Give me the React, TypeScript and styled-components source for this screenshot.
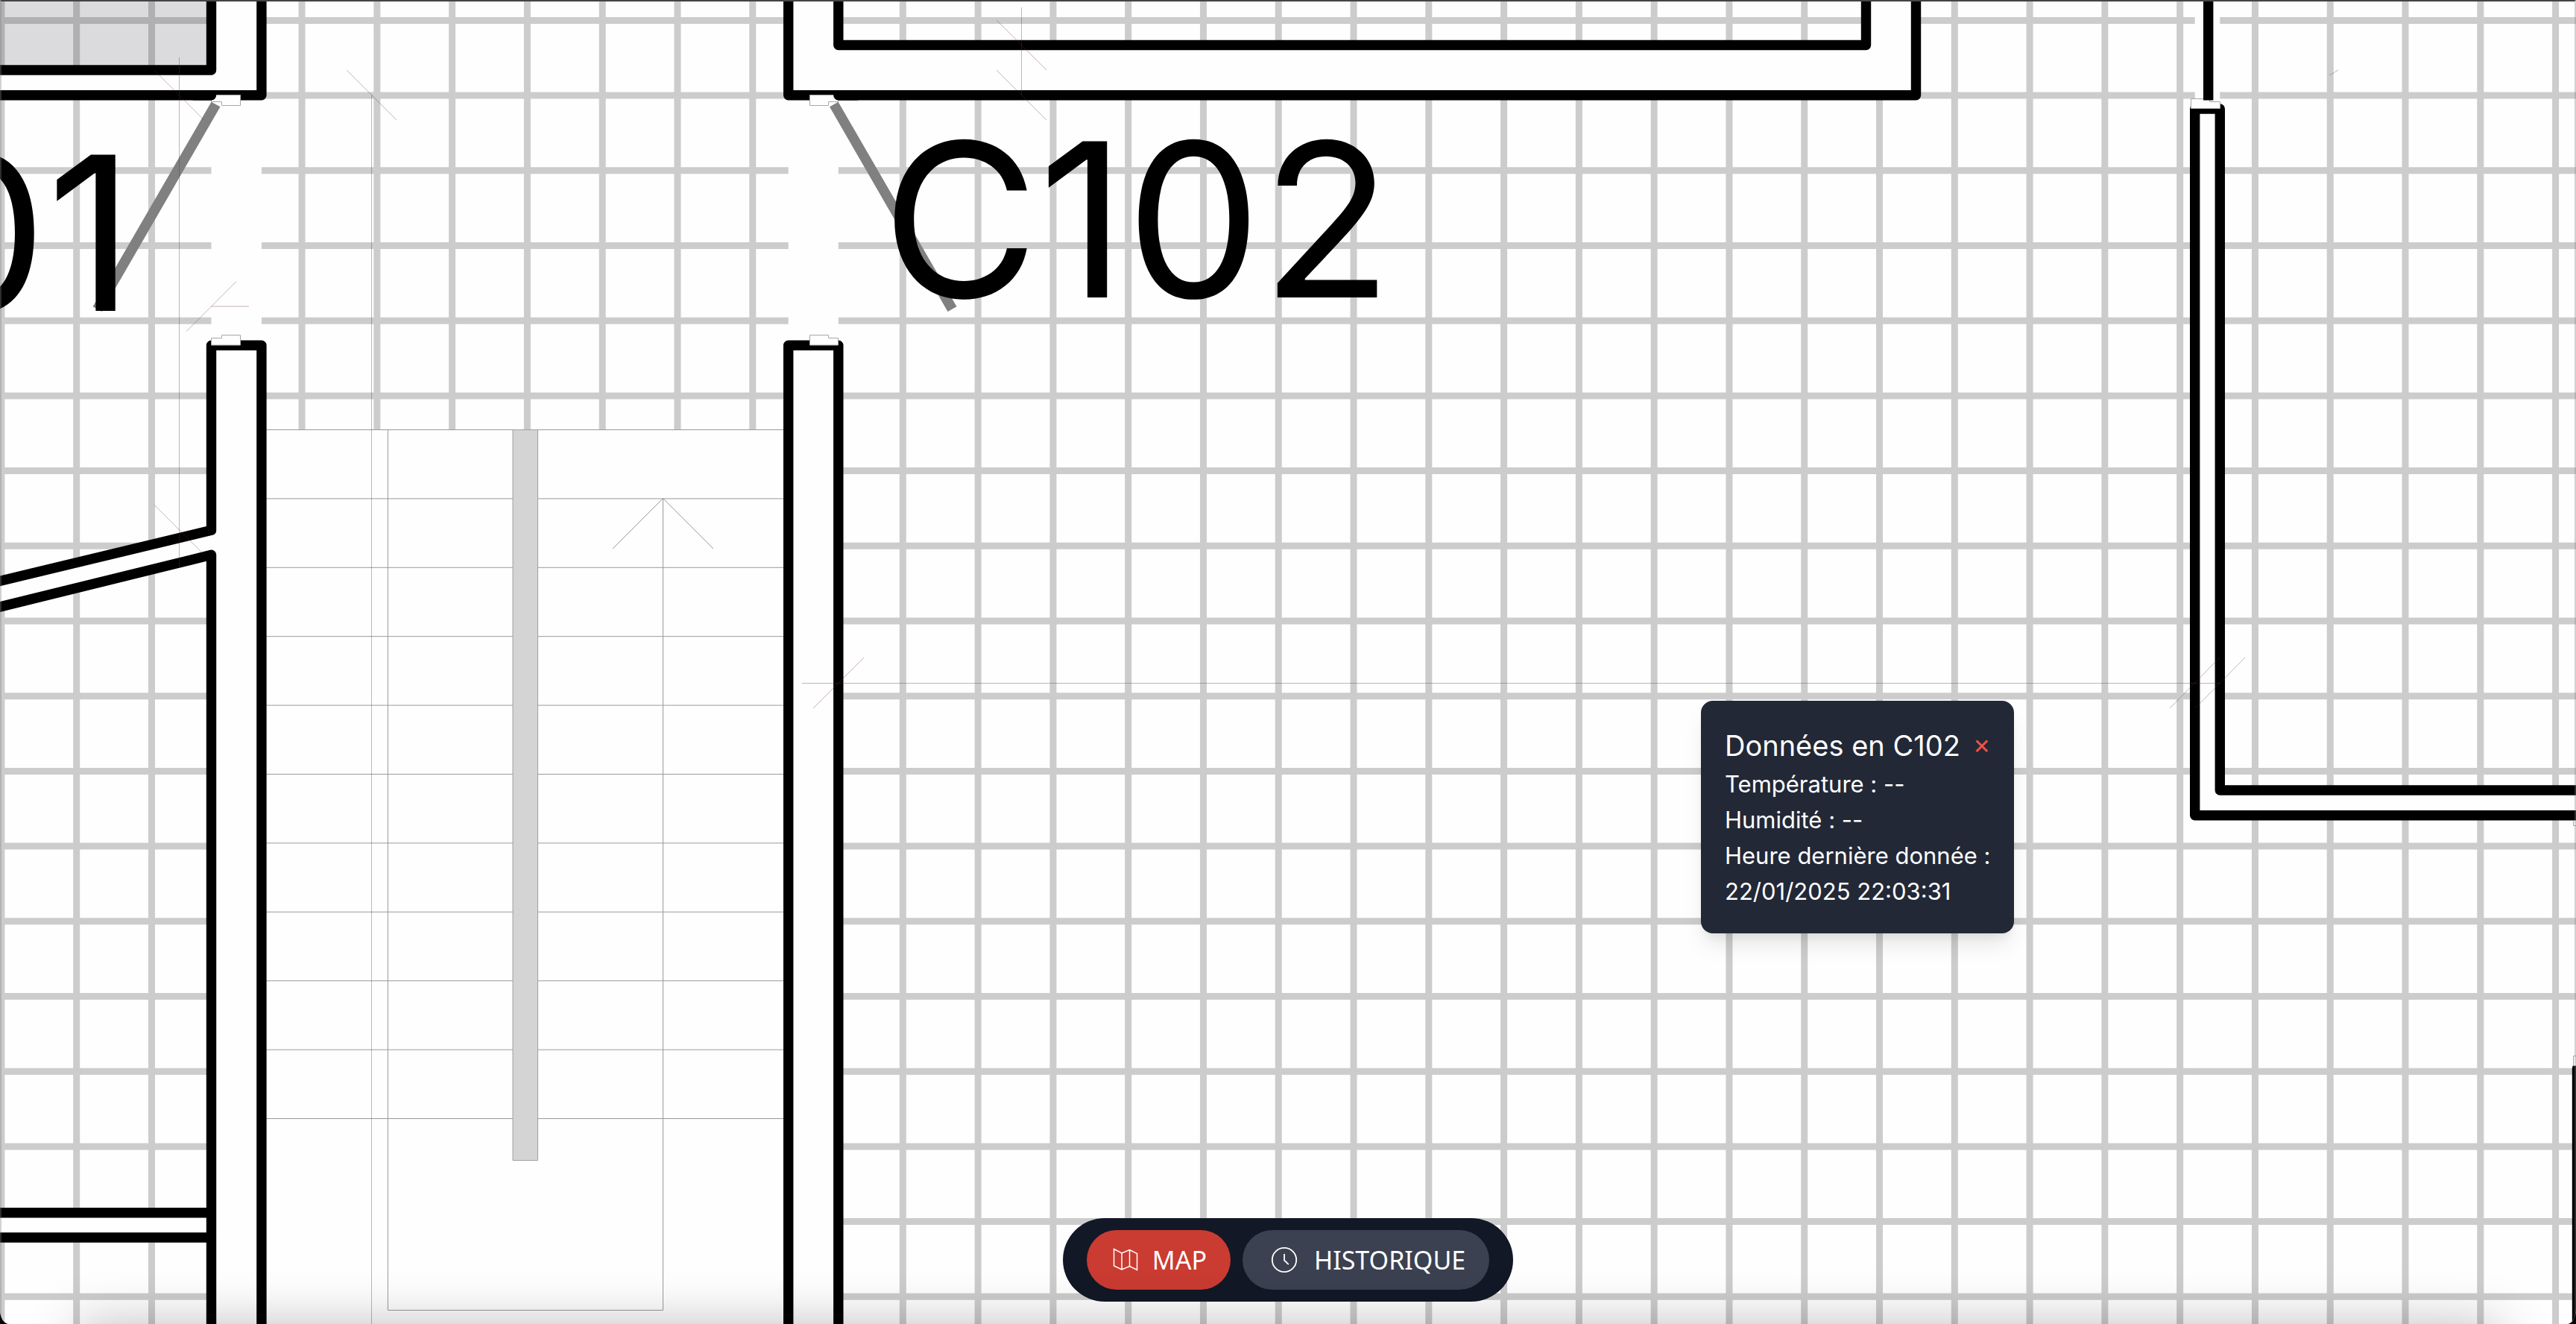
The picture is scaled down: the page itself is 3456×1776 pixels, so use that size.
import React from "react";
import styled, { createGlobalStyle } from "styled-components";

const GlobalStyle = createGlobalStyle`
  *, *::before, *::after { box-sizing: border-box; }
  body { margin: 0; background: #000; }
`;

const Screen = styled.main`
  position: relative;
  display: grid;
  grid-template: minmax(0, 1fr) / minmax(0, 1fr);
  height: 100vh;
  overflow: hidden;
  background: #fefefe;
  border-radius: 0 0 12px 12px / 0 0 20px 20px;
  font-family: Inter, "Liberation Sans", sans-serif;

  &::before {
    content: "";
    position: absolute;
    z-index: 3;
    top: 100%;
    left: 104px;
    right: 104px;
    height: 200px;
    box-shadow: 0 0 68px rgba(0, 0, 0, 0.25);
    pointer-events: none;
  }

  &::after {
    content: "";
    position: absolute;
    z-index: 3;
    inset: 0;
    border: solid rgba(128, 128, 128, 0.35);
    border-width: 0 2px;
    border-top: 2px solid #444;
    pointer-events: none;
  }
`;

const Plan = styled.svg`
  grid-area: 1 / 1;
  display: block;
  width: 100%;
  height: 100%;

  .grid { stroke: #ccc; stroke-width: 9; fill: none; }
  .white { fill: #fefefe; }
  .shade { fill: rgba(0, 0, 20, 0.137); }
  .wall { stroke: #000; stroke-width: 13.4; fill: none; stroke-linejoin: round; stroke-linecap: round; }
  .butt { stroke-linecap: butt; }
  .frame { fill: #fefefe; stroke: #a4a8a4; stroke-width: 1; }
  .leaf { fill: #808080; }
  .thin { stroke: #9a9a9a; stroke-width: 1; fill: none; }
  .rail { fill: #d4d4d4; stroke: #a0a0a0; stroke-width: 1; }
  .dim { stroke: rgba(100, 45, 55, 0.36); stroke-width: 1; fill: none; }
`;

const RoomName = styled.text`
  font-family: Inter, "Liberation Sans", sans-serif;
  font-size: 288px;
  fill: #000;
`;

const Popup = styled.aside`
  position: absolute;
  z-index: 1;
  left: 2282px;
  top: 940px;
  padding: 32px;
  border-radius: 16px;
  background: #222836;
  color: #fff;
  font-size: 31px;
  line-height: 48px;
  white-space: nowrap;
  box-shadow: 0 20px 30px -6px rgba(0, 0, 0, 0.1), 0 8px 12px -4px rgba(0, 0, 0, 0.06);
`;

const PopupHead = styled.header`
  display: flex;
  align-items: flex-start;
  justify-content: space-between;
`;

const PopupTitle = styled.h2`
  margin: 0;
  font-size: 38px;
  font-weight: 400;
  line-height: 56px;
`;

const Close = styled.button`
  padding: 0;
  border: 0;
  background: none;
  color: #ef5148;
  font: inherit;
  font-size: 36px;
  line-height: 52px;
  cursor: pointer;
`;

const Line = styled.p`
  margin: 0;
`;

const Nav = styled.nav`
  grid-area: 1 / 1;
  z-index: 2;
  align-self: end;
  justify-self: center;
  display: flex;
  gap: 16px;
  margin-bottom: 30px;
  padding: 16px 32px;
  border-radius: 56px;
  background: #121826;
`;

const Tab = styled.button<{ $active?: boolean }>`
  display: flex;
  align-items: center;
  gap: 16px;
  height: 80px;
  padding: 0 32px;
  border: 0;
  border-radius: 40px;
  background: ${(p) => (p.$active ? "#ca3b32" : "#3b4150")};
  color: #fff;
  font-family: "Noto Sans", "DejaVu Sans", sans-serif;
  font-size: 34px;
  font-weight: 400;
  line-height: 48px;
  cursor: pointer;
`;

const TabIcon = styled.svg<{ $size: number }>`
  width: ${(p) => p.$size}px;
  height: ${(p) => p.$size}px;
  fill: none;
  stroke: currentColor;
`;

const columns = Array.from({ length: 35 }, (_, i) => 1.9 + i * 100.785);
const rows = Array.from({ length: 18 }, (_, i) => 27.4 + i * 100.7);
const steps = Array.from({ length: 11 }, (_, i) => 576.5 + i * 92.4);

const dimensions =
  "M240.5 77V761M498.5 128V1776M206.7 94L273.7 161M465.2 94L532 161" +
  "M317 377.5L250 444.5M206.7 677L273.7 744M1337 27L1404 94M1337 94L1404 161" +
  "M1370.5 10V128M1076 916.5H2978M1159 882L1091 950M2978 882L2911 950M3012 882L2945 950M283.5 411H334M3125 101L3137 94";

function FloorPlan() {
  return (
    <Plan viewBox="0 0 3456 1776" preserveAspectRatio="xMidYMid slice" role="img" aria-label="Plan">
      <path className="grid" d={columns.map((x) => `M${x} 0V1776`).join("") + rows.map((y) => `M0 ${y}H3456`).join("")} />
      <path className="shade" d="M0 0H277V88H0Z" />

      <path
        className="white"
        d="M0 94H283.5V0H350.9V1776H283.5V744.3L0 814V779.3L283.5 711.3V127.7H0ZM0 1626.7H283.5V1660H0Z
           M1057.7 0H1124.8V60.5H2503.5V0H2570.5V127.7H1124.8V1776H1057.7Z
           M2944.7 0H2978.3V1060H3456V1093.7H2944.7Z M350.9 576H1057.7V1776H350.9Z"
      />

      <path className="thin" d={steps.map((y) => `M357 ${y}H1051`).join("")} />
      <path className="thin" d="M520.4 576V1757.5H889.5V668.5M822 736L889.5 668.5L957 736" />
      <path className="rail" d="M688 576.5H721.5V1556.5H688Z" />

      <path
        className="wall"
        d="M-20 94H283.5V-20M350.9 -20V127.7H-20M-20 784.1L283.5 711.3V463.3H350.9V1800M-20 818.9L283.5 744.3V1800
           M-20 1626.7H283.5M-20 1660H283.5
           M1057.7 -20V127.7H2570.5V-20M1124.8 -20V60.5H2503.5V-20M1057.7 1800V463.3H1124.8V1800
           M3480 1093.7H2944.7V146H2978.3V1060H3480M3457.5 1800V1433"
      />
      <path className="frame" d="M2939.5 132.5H2964.5V136.5H2978.5V145.5H2939.5Z" />
      <path className="wall butt" d="M2962.7 0V134.5" />
      <path className="frame" d="M3452.5 1416.5H3470V1429.5H3452.5ZM3452.5 1100.5V1107.5H3470" />

      <path className="frame" d="M290 127.5H322.5V141.5H297.5V136.5H283.5V127.5Z" />
      <path className="frame" d="M297.5 449.5H322.5V463H283.5V453.5H297.5Z" />
      <path className="frame" d="M1086.5 127.5H1124.5V136.5H1111.5V141.5H1086.5Z" />
      <path className="frame" d="M1086.5 449.5H1111.5V453.5H1124.5V463H1086.5Z" />
      <path className="wall" d="M260 127.7H283.5M1124.8 127.7H1150" />
      <path className="leaf" d="M283.5 136.7L295.5 143.3L136.6 418L124.6 411.3Z" />
      <path className="leaf" d="M1124.6 136.7L1113 143.3L1271.5 418L1283.5 411.3Z" />

      <path className="dim" d={dimensions} />
      <RoomName x="180" y="417" textAnchor="end">C101</RoomName>
      <RoomName x="1183" y="399">C102</RoomName>
    </Plan>
  );
}

function MapIcon() {
  return (
    <TabIcon $size={40} viewBox="0 0 40 40" strokeWidth="1.5" aria-hidden="true">
      <path d="M4.5 5.5L15 11L25.5 6.5L35.5 11.5V33.5L25.5 28.5L15 33L4.5 28ZM15 11V33M25.5 6.5V28.5" />
    </TabIcon>
  );
}

function ClockIcon() {
  return (
    <TabIcon $size={48} viewBox="0 0 48 48" strokeWidth="1.8" aria-hidden="true">
      <circle cx="24" cy="24" r="16.2" />
      <path d="M24 16V24.5L29.8 30.2" />
    </TabIcon>
  );
}

export default function App() {
  return (
    <>
      <GlobalStyle />
      <Screen>
        <FloorPlan />
        <Popup>
          <PopupHead>
            <PopupTitle>Données en C102</PopupTitle>
            <Close type="button" aria-label="Fermer">×</Close>
          </PopupHead>
          <Line>Température : --</Line>
          <Line>Humidité : --</Line>
          <Line>Heure dernière donnée :</Line>
          <Line>22/01/2025 22:03:31</Line>
        </Popup>
        <Nav>
          <Tab type="button" $active>
            <MapIcon />
            MAP
          </Tab>
          <Tab type="button">
            <ClockIcon />
            HISTORIQUE
          </Tab>
        </Nav>
      </Screen>
    </>
  );
}
